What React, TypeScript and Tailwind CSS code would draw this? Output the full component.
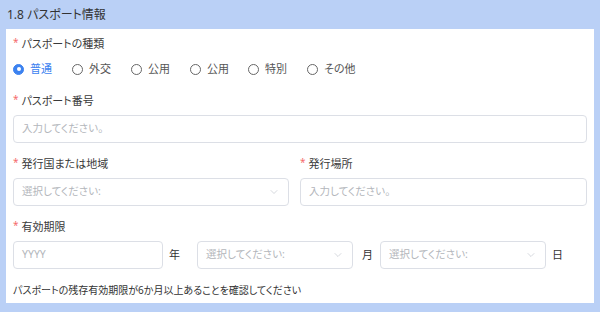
import { ChevronDown } from "lucide-react";

const font = { fontFamily: '"Noto Sans", "Noto Sans CJK JP", sans-serif', fontFeatureSettings: '"palt"' };

function Label({ text }: { text: string }) {
    return (
        <div className="h-[20px] flex items-center text-[11px] text-[#3a3a3a]">
            <span className="text-[#f56c6c] mr-[3px] text-[10px] -mt-[3px]">*</span>
            {text}
        </div>
    );
}

function TextBox({ placeholder, className }: { placeholder: string; className?: string }) {
    return (
        <div className={"h-[28px] border border-[#dcdfe6] rounded-[4px] flex items-center pl-[8px] text-[10.5px] text-[#b3b6bb] " + (className ?? "")}>
            {placeholder}
        </div>
    );
}

function SelectBox({ className }: { className?: string }) {
    return (
        <div className={"h-[28px] border border-[#dcdfe6] rounded-[4px] flex items-center justify-between pl-[8px] pr-[8px] text-[10.5px] text-[#b3b6bb] " + (className ?? "")}>
            <span>選択してください:</span>
            <ChevronDown size={12} strokeWidth={1.3} className="text-[#c0c4cc]" />
        </div>
    );
}

function Radio({ label, checked }: { label: string; checked?: boolean }) {
    return (
        <div className="flex items-center">
            <span
                className={
                    "w-[11px] h-[11px] rounded-full border flex items-center justify-center " +
                    (checked ? "border-[#3c82f0] bg-[#3c82f0]" : "border-[#666]")
                }
            >
                {checked && <span className="w-[4px] h-[4px] rounded-full bg-white" />}
            </span>
            <span className={"ml-[6px] text-[11px] " + (checked ? "text-[#3c82f0]" : "text-[#555]")}>{label}</span>
        </div>
    );
}

export default function App() {
    return (
        <div className="w-[600px] h-[312px] bg-[#bad0f6] flex flex-col px-[6px] pb-[9px]" style={font}>
            {/* Header */}
            <div className="h-[29px] flex items-center pl-[1px] pt-[1px] text-[12px] text-[#333]">1.8 パスポート情報</div>

            {/* Panel */}
            <div className="flex-1 bg-white px-[7px] pt-[5px]">
                <Label text="パスポートの種類" />
                <div className="h-[20px] mt-[5px] flex items-center">
                    <div className="w-[59px]"><Radio label="普通" checked /></div>
                    <div className="w-[59px]"><Radio label="外交" /></div>
                    <div className="w-[59px]"><Radio label="公用" /></div>
                    <div className="w-[58px]"><Radio label="公用" /></div>
                    <div className="w-[59px]"><Radio label="特別" /></div>
                    <Radio label="その他" />
                </div>

                <div className="mt-[12px]">
                    <Label text="パスポート番号" />
                    <TextBox placeholder="入力してください。" className="mt-[4px]" />
                </div>

                <div className="mt-[11px] flex gap-[11px]">
                    <div className="w-[276px]">
                        <Label text="発行国または地域" />
                        <SelectBox className="mt-[4px]" />
                    </div>
                    <div className="flex-1">
                        <Label text="発行場所" />
                        <TextBox placeholder="入力してください。" className="mt-[4px]" />
                    </div>
                </div>

                <div className="mt-[11px]">
                    <Label text="有効期限" />
                    <div className="mt-[4px] flex items-center text-[11px] text-[#333]">
                        <TextBox placeholder="YYYY" className="w-[150px]" />
                        <span className="ml-[6px]">年</span>
                        <SelectBox className="w-[156px] ml-[17px]" />
                        <span className="ml-[9px]">月</span>
                        <SelectBox className="w-[166px] ml-[7px]" />
                        <span className="ml-[6px]">日</span>
                    </div>
                </div>

                <div className="mt-[11px] h-[20px] flex items-center text-[10px] text-[#333]">
                    パスポートの残存有効期限が6か月以上あることを確認してください
                </div>
            </div>
        </div>
    );
}
